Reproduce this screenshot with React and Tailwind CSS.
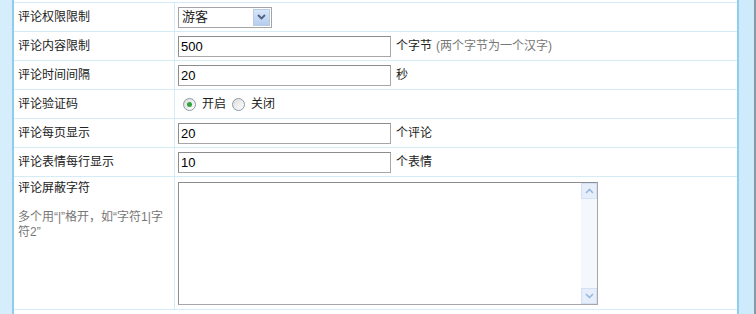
import React from 'react';

const font = { fontFamily: '"Liberation Sans", "Noto Sans CJK SC", sans-serif' };

function Radio({ checked, label }) {
  return (
    <label className="flex items-center gap-[6px] mr-[6px]">
      <span className="w-[13px] h-[13px] rounded-full border border-[#8b9aa6] bg-gradient-to-br from-[#dcdcdc] to-white flex items-center justify-center">
        {checked && <span className="w-[5px] h-[5px] rounded-full bg-[#2fa53a]" />}
      </span>
      <span>{label}</span>
    </label>
  );
}

function TextInput({ value }) {
  return (
    <input
      readOnly
      value={value}
      className="w-[213px] h-[21px] border border-[#a7a7a7] border-t-[#8d8d8d] border-l-[#8d8d8d] bg-white px-[2px] text-[13px] text-black outline-none"
      style={font}
    />
  );
}

function Row({ label, children, top }) {
  return (
    <div className={`flex border-b border-[#d5ecf7] ${top ? 'h-[133px]' : 'h-[29px]'}`}>
      <div className={`w-[161px] shrink-0 border-r border-[#d5ecf7] pl-[4px] pr-[3px] flex ${top ? 'flex-col pt-[2px]' : 'items-center'}`}>
        {label}
      </div>
      <div className={`flex-1 pl-[3px] flex ${top ? 'items-start pt-[5px]' : 'items-center'}`}>{children}</div>
    </div>
  );
}

function Chevron({ up }) {
  return (
    <svg width="9" height="6" viewBox="0 0 9 6">
      <path d={up ? 'M1 5 L4.5 1.5 L8 5' : 'M1 1 L4.5 4.5 L8 1'} fill="none" stroke="#9ab8d8" strokeWidth="1.6" />
    </svg>
  );
}

export default function App() {
  return (
    <div className="w-[756px] h-[314px] flex bg-white text-[12px] text-[#222] overflow-hidden" style={font}>
      <div className="w-[14px] bg-[#d6eefb] border-r-2 border-[#8fcdec]" />
      <div className="w-[723px] pt-[2px]">
        <div className="border-t border-[#d5ecf7]">
          <Row label="评论权限限制">
            <div className="w-[94px] h-[21px] border border-[#a5a5a5] flex items-center bg-white">
              <span className="flex-1 pl-[3px] text-[13px]">游客</span>
              <span className="w-[17px] h-[17px] mr-[1px] bg-gradient-to-b from-[#d8e6f8] to-[#b5cdee] border border-[#b8cbe6] flex items-center justify-center">
                <svg width="9" height="6" viewBox="0 0 9 6">
                  <path d="M1 1 L4.5 4.5 L8 1" fill="none" stroke="#4d6185" strokeWidth="1.8" />
                </svg>
              </span>
            </div>
          </Row>
          <Row label="评论内容限制">
            <TextInput value="500" />
            <span className="ml-[5px]">个字节</span>
            <span className="ml-[4px] text-[#777]">(两个字节为一个汉字)</span>
          </Row>
          <Row label="评论时间间隔">
            <TextInput value="20" />
            <span className="ml-[5px]">秒</span>
          </Row>
          <Row label="评论验证码">
            <div className="flex items-center pl-[5px]">
              <Radio checked label="开启" />
              <Radio label="关闭" />
            </div>
          </Row>
          <Row label="评论每页显示">
            <TextInput value="20" />
            <span className="ml-[5px]">个评论</span>
          </Row>
          <Row label="评论表情每行显示">
            <TextInput value="10" />
            <span className="ml-[5px]">个表情</span>
          </Row>
          <Row
            top
            label={
              <>
                <span className="leading-[18px]">评论屏蔽字符</span>
                <span className="mt-[13px] leading-[15px] text-[#777]">多个用“|”格开，如“字符1|字符2”</span>
              </>
            }
          >
            <div className="w-[420px] h-[123px] border border-[#a7a7a7] border-t-[#8d8d8d] border-l-[#8d8d8d] flex bg-white">
              <textarea readOnly className="flex-1 resize-none outline-none" />
              <div className="w-[16px] bg-[#f4f8fd] flex flex-col justify-between">
                <span className="h-[16px] bg-[#e6eefb] border border-[#d4e0f3] flex items-center justify-center">
                  <Chevron up />
                </span>
                <span className="h-[16px] bg-[#e6eefb] border border-[#d4e0f3] flex items-center justify-center">
                  <Chevron />
                </span>
              </div>
            </div>
          </Row>
        </div>
      </div>
      <div className="w-[2px] bg-[#8fcdec]" />
      <div className="w-[17px] bg-[#cdebfa] border-r-2 border-[#8a9aa4]" />
    </div>
  );
}
